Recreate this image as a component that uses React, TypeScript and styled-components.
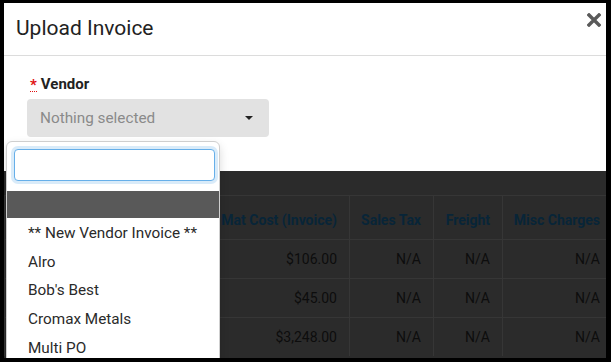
import React from "react";
import styled, { createGlobalStyle } from "styled-components";

const Global = createGlobalStyle`
  html, body { margin: 0; padding: 0; background: #000; }
  body { font-family: Roboto, "Liberation Sans", sans-serif; }
  * { box-sizing: border-box; }
`;

const Frame = styled.div`
  width: 611px;
  height: 362px;
  padding: 3px 5px 4px 4px;
  background: #000;
`;

const Modal = styled.div`
  position: relative;
  width: 602px;
  height: 355px;
  background: #fff;
  display: flex;
  flex-direction: column;
  overflow: hidden;
`;

const Header = styled.div`
  height: 53px;
  flex: none;
  border-bottom: 1px solid #dcdcdc;
  display: flex;
  align-items: center;
  justify-content: space-between;
  padding: 0 5px 14px 12px;
`;

const Title = styled.h1`
  margin: 0;
  font-size: 21px;
  font-weight: 400;
  color: #222;
  padding-top: 12px;
`;

const Close = styled.button`
  border: 0;
  background: none;
  padding: 0;
  width: 14px;
  height: 14px;
  margin-top: -4px;
  display: flex;
`;

const Body = styled.div`
  height: 115px;
  flex: none;
  padding: 18px 0 0 23px;
`;

const Label = styled.div`
  font-size: 15px;
  font-weight: 700;
  color: #222;
  display: flex;
  gap: 4px;
  padding-left: 3px;
  height: 20px;
  align-items: center;
`;

const Req = styled.span`
  color: #e01010;
  border-bottom: 1px dotted #e01010;
  line-height: 11px;
  padding-top: 3px;
`;

const Select = styled.div`
  margin-top: 5px;
  width: 242px;
  height: 38px;
  background: #e2e2e2;
  border-radius: 4px;
  display: flex;
  align-items: center;
  justify-content: space-between;
  padding: 0 16px 0 13px;
  color: #8a8a8a;
  font-size: 15.3px;
`;

const Caret = styled.span`
  width: 0;
  height: 0;
  border-left: 4px solid transparent;
  border-right: 4px solid transparent;
  border-top: 4px solid #222;
`;

const Backdrop = styled.div`
  flex: 1;
  background: #2b2b2b;
  padding-top: 24px;
`;

const Table = styled.div`
  display: grid;
  grid-template-columns: 1fr 134px 84px 69px 104px;
`;

const Cell = styled.div<{ $head?: boolean; $last?: boolean }>`
  height: ${(p) => (p.$head ? 44 : 39)}px;
  border-top: 1px solid #363636;
  border-left: 1px solid #363636;
  display: flex;
  align-items: center;
  justify-content: flex-end;
  padding-right: ${(p) => (p.$last ? 6 : 12)}px;
  padding-top: ${(p) => (p.$head ? 5 : 0)}px;
  font-size: 14px;
  font-weight: ${(p) => (p.$head ? 700 : 400)};
  color: ${(p) => (p.$head ? "#082538" : "#0d0d0d")};
  white-space: nowrap;
`;

const Menu = styled.div`
  position: absolute;
  left: 2px;
  top: 138px;
  width: 214px;
  height: 230px;
  background: #fff;
  border: 1px solid #cfcfcf;
  border-radius: 6px 6px 0 0;
  box-shadow: 0 4px 10px rgba(0, 0, 0, 0.15);
  padding-top: 7px;
`;

const Search = styled.input`
  display: block;
  margin: 0 4px 0 7px;
  width: 201px;
  height: 32px;
  border: 1px solid #66afe9;
  border-radius: 4px;
  outline: none;
  box-shadow: 0 0 0 3px rgba(102, 175, 233, 0.25);
`;

const Band = styled.div`
  margin-top: 10px;
  margin-bottom: 1px;
  height: 27px;
  background: #595959;
`;

const Item = styled.div`
  height: 28.6px;
  display: flex;
  align-items: center;
  padding-left: 21px;
  font-size: 15.3px;
  color: #2a2a2a;
`;

const rows = [
  ["$106.00", "N/A", "N/A", "N/A"],
  ["$45.00", "N/A", "N/A", "N/A"],
  ["$3,248.00", "N/A", "N/A", "N/A"],
];
const heads = ["Mat Cost (Invoice)", "Sales Tax", "Freight", "Misc Charges"];
const vendors = ["** New Vendor Invoice **", "Alro", "Bob's Best", "Cromax Metals", "Multi PO"];

export default function App() {
  return (
    <>
      <Global />
      <Frame>
        <Modal>
          <Header>
            <Title>Upload Invoice</Title>
            <Close aria-label="close">
              <svg width="14" height="14" viewBox="0 0 14 14">
                <path d="M2 2 L12 12 M12 2 L2 12" stroke="#5a5a5a" strokeWidth="3.4" strokeLinecap="square" />
              </svg>
            </Close>
          </Header>
          <Body>
            <Label>
              <Req>*</Req>
              <span>Vendor</span>
            </Label>
            <Select>
              <span>Nothing selected</span>
              <Caret />
            </Select>
          </Body>
          <Backdrop>
            <Table>
              <Cell $head />
              {heads.map((h, i) => (
                <Cell $head key={h} $last={i === 3}>
                  {h}
                </Cell>
              ))}
              {rows.map((r, ri) => (
                <React.Fragment key={ri}>
                  <Cell />
                  {r.map((v, i) => (
                    <Cell key={i} $last={i === 3}>
                      {v}
                    </Cell>
                  ))}
                </React.Fragment>
              ))}
            </Table>
          </Backdrop>
          <Menu>
            <Search />
            <Band />
            {vendors.map((v) => (
              <Item key={v}>{v}</Item>
            ))}
          </Menu>
        </Modal>
      </Frame>
    </>
  );
}
